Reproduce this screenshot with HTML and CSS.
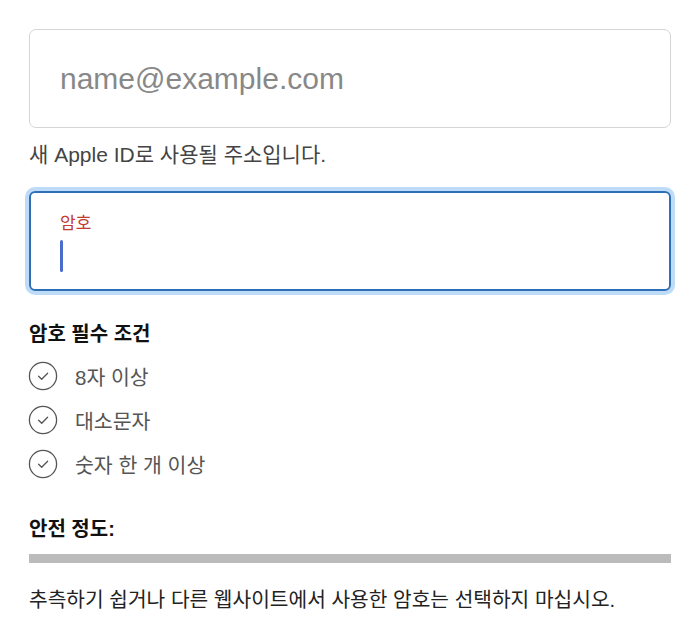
FILE: index.html
```html
<!DOCTYPE html>
<html lang="ko">
<head>
    <meta charset="UTF-8">
    <meta name="viewport" content="width=device-width, initial-scale=1.0">
    <title>Apple ID 생성</title>
    <link rel="stylesheet" href="styles.css">
</head>
<body>
    <main class="form">
        <div class="field">
            <input type="email" class="email-input" placeholder="name@example.com">
        </div>
        <p class="hint">새 Apple ID로 사용될 주소입니다.</p>

        <div class="password-box">
            <label class="password-label">암호</label>
            <span class="caret"></span>
        </div>

        <section class="requirements">
            <h3>암호 필수 조건</h3>
            <ul>
                <li>
                    <svg class="check" viewBox="0 0 30 30" width="30" height="30"><circle cx="15" cy="15" r="13.6" fill="none" stroke="#555" stroke-width="1.3"/><path d="M10.6 15.2l3.1 3.1 5.9-6.1" fill="none" stroke="#555" stroke-width="1.3" stroke-linecap="round" stroke-linejoin="round"/></svg>
                    <span>8자 이상</span>
                </li>
                <li>
                    <svg class="check" viewBox="0 0 30 30" width="30" height="30"><circle cx="15" cy="15" r="13.6" fill="none" stroke="#555" stroke-width="1.3"/><path d="M10.6 15.2l3.1 3.1 5.9-6.1" fill="none" stroke="#555" stroke-width="1.3" stroke-linecap="round" stroke-linejoin="round"/></svg>
                    <span>대소문자</span>
                </li>
                <li>
                    <svg class="check" viewBox="0 0 30 30" width="30" height="30"><circle cx="15" cy="15" r="13.6" fill="none" stroke="#555" stroke-width="1.3"/><path d="M10.6 15.2l3.1 3.1 5.9-6.1" fill="none" stroke="#555" stroke-width="1.3" stroke-linecap="round" stroke-linejoin="round"/></svg>
                    <span>숫자 한 개 이상</span>
                </li>
            </ul>
        </section>

        <section class="strength">
            <h3>안전 정도:</h3>
            <div class="strength-bar"></div>
        </section>

        <p class="advice">추측하기 쉽거나 다른 웹사이트에서 사용한 암호는 선택하지 마십시오.</p>
    </main>
</body>
</html>
```

FILE: styles.css
```css
body {
    margin: 0;
    font-family: "Liberation Sans", "Noto Sans CJK KR", sans-serif;
    background: #fff;
    color: #222;
}
.form {
    padding: 29px 29px 0 29px;
}
.field {
    margin: 0;
}
.email-input {
    box-sizing: border-box;
    width: 100%;
    height: 99px;
    border: 1px solid #d4d4d4;
    border-radius: 7px;
    padding: 0 30px;
    font-family: "Liberation Sans", sans-serif;
    font-size: 30px;
    color: #222;
    outline: none;
}
.email-input::placeholder {
    color: #888;
}
.hint {
    margin: 14px 0 0 0;
    font-size: 21px;
    line-height: 26px;
    color: #444;
}
.password-box {
    box-sizing: border-box;
    margin-top: 23px;
    height: 100px;
    border: 2px solid #2f6fb7;
    border-radius: 6px;
    box-shadow: 0 0 0 4px #bedcf8;
    padding: 19px 29px 0 29px;
    display: flex;
    flex-direction: column;
    align-items: flex-start;
}
.password-label {
    font-size: 17px;
    line-height: 24px;
    color: #c23a30;
}
.caret {
    display: block;
    width: 3px;
    height: 32px;
    margin-top: 4px;
    border-radius: 2px;
    background: #4a6ccd;
}
h3 {
    margin: 0;
    font-size: 20px;
    font-weight: bold;
    color: #111;
}
.requirements {
    margin-top: 30px;
}
.requirements h3 {
    line-height: 26px;
}
.requirements ul {
    list-style: none;
    margin: 7px 0 0 0;
    padding: 0;
}
.requirements li {
    display: flex;
    align-items: center;
    gap: 17px;
    height: 44px;
    font-size: 20.5px;
    color: #555;
}
.check {
    flex: none;
    margin-left: -1px;
}
.strength {
    margin-top: 30px;
}
.strength h3 {
    line-height: 26px;
}
.strength-bar {
    margin-top: 12px;
    height: 9px;
    background: #bbb;
}
.advice {
    margin: 24px 0 0 0;
    font-size: 20.3px;
    line-height: 26px;
    color: #222;
}
```
